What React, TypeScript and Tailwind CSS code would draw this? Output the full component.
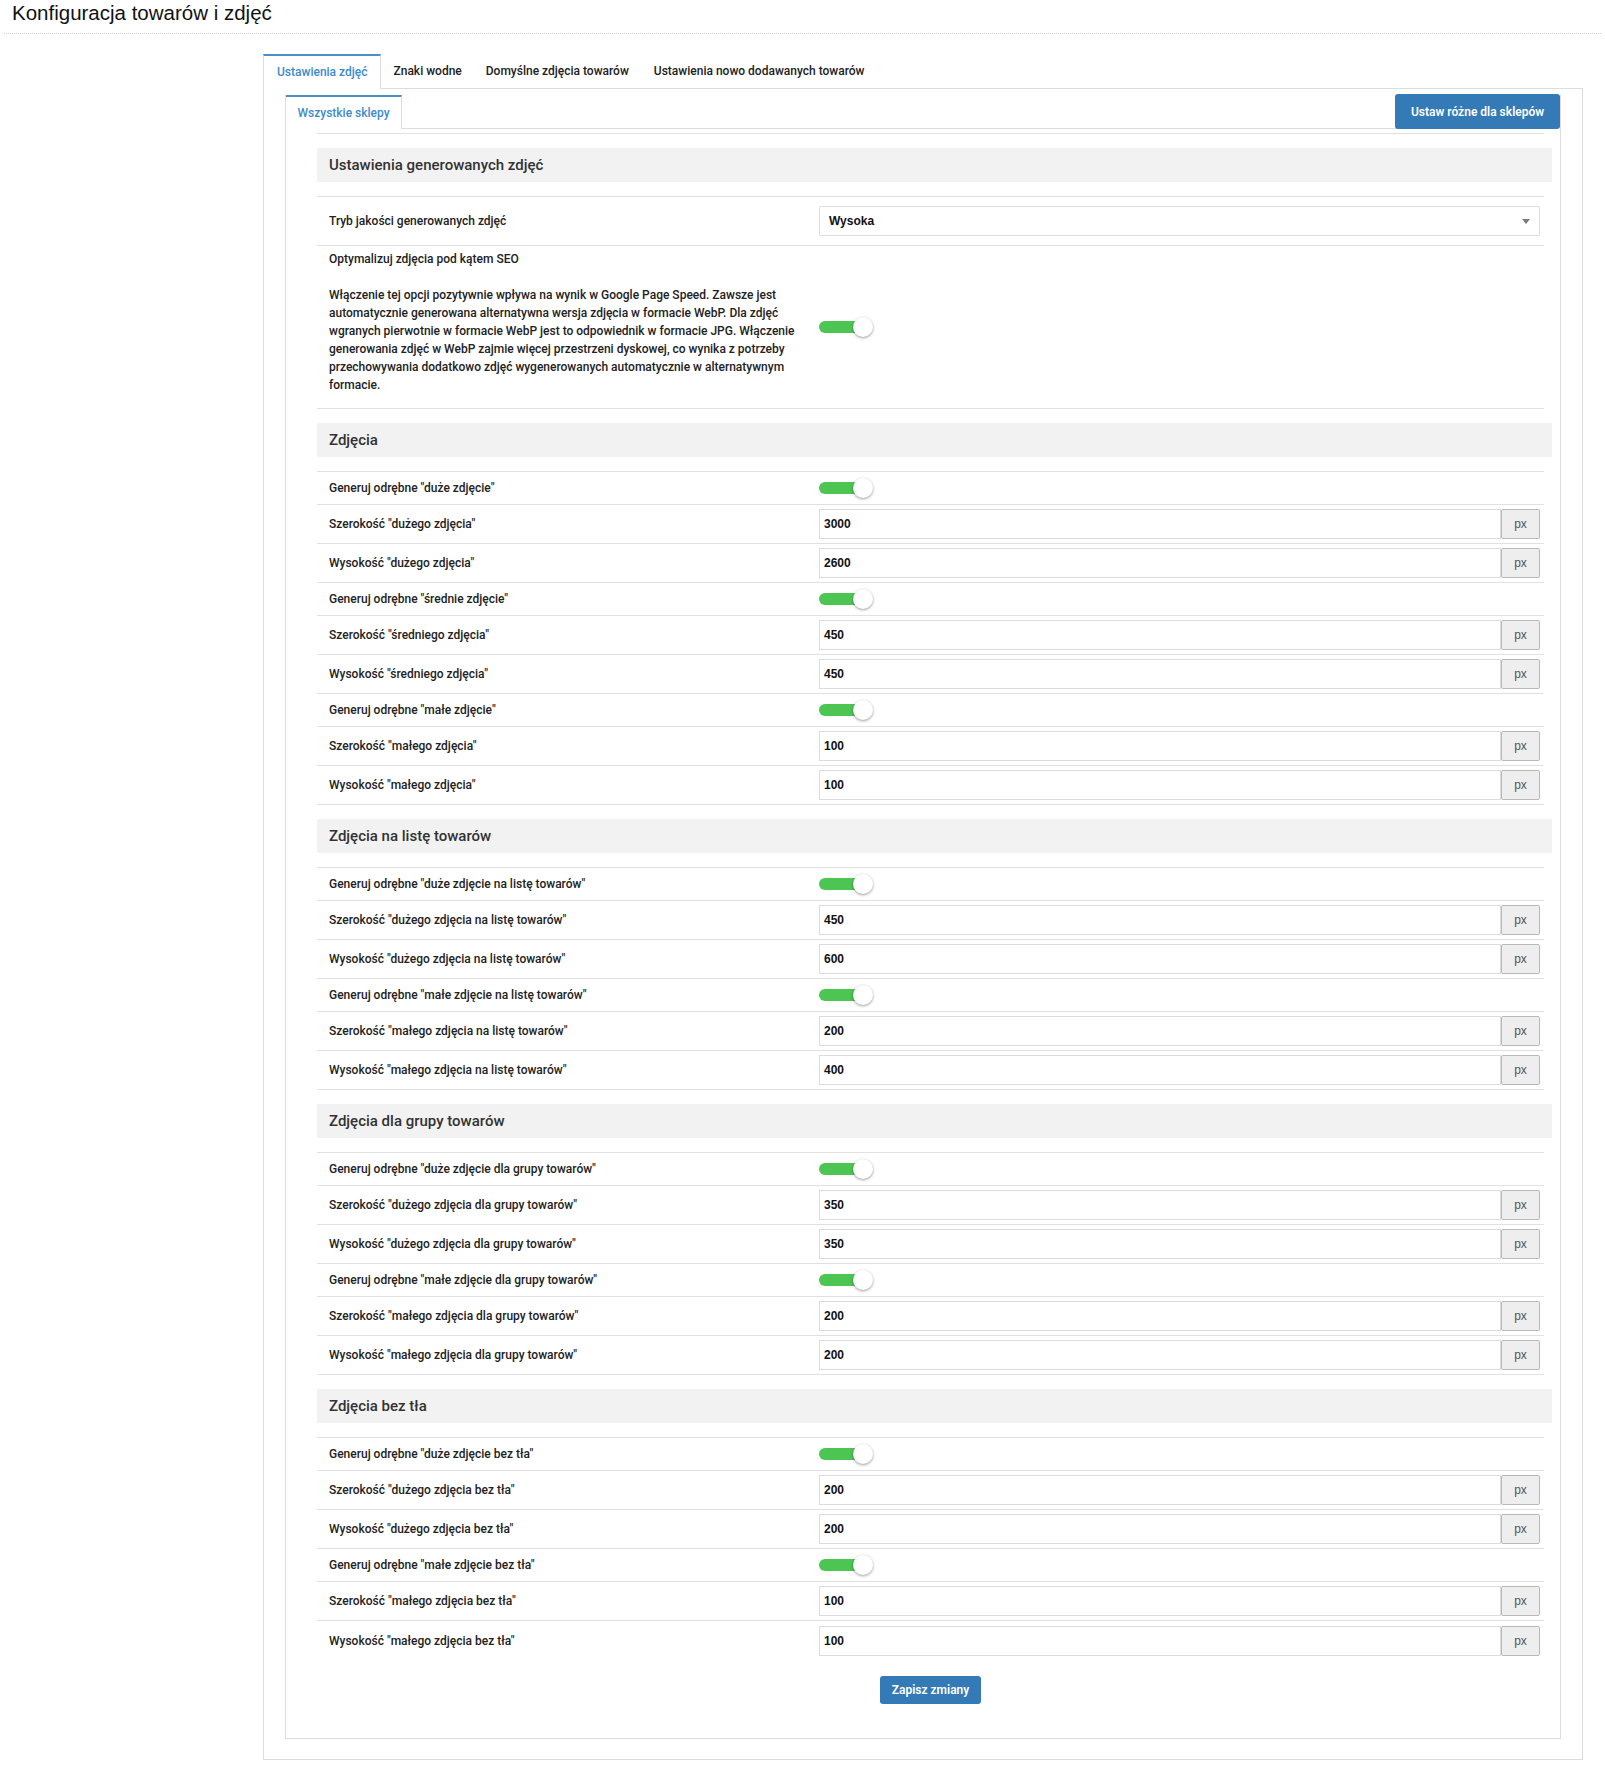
import React from "react";

const SANS = "font-['Roboto','Liberation_Sans',sans-serif]";

type RowT =
  | { kind: "toggle"; label: string }
  | { kind: "input"; label: string; value: string };

function Toggle() {
  return (
    <div className="flex items-center">
      <div className="h-[12px] w-[44px] rounded-full bg-[#4cc552]" />
      <div className="-ml-[10px] h-[20px] w-[20px] rounded-full bg-white shadow-[0_1px_3px_rgba(0,0,0,0.4)]" />
    </div>
  );
}

function PxInput({ value }: { value: string }) {
  return (
    <div className="flex h-[30px] w-full">
      <input
        readOnly
        value={value}
        className="h-full min-w-0 flex-1 border border-[#dcdcdc] bg-white px-[4px] font-['Liberation_Sans',Arial,sans-serif] text-[12px] font-semibold text-[#111] outline-none"
      />
      <div className="flex h-full w-[39px] items-center justify-center rounded-[2px] border border-[#b9b9b9] bg-[#eeeeee] font-['Liberation_Sans',Arial,sans-serif] text-[12px] text-[#555]">
        px
      </div>
    </div>
  );
}

function Row({ row, last }: { row: RowT; last: boolean }) {
  const border = last ? "" : "border-b border-[#e1e1e1]";
  if (row.kind === "toggle") {
    return (
      <div className={`flex h-[33px] ${border}`}>
        <div className="flex w-[490px] items-center pl-[12px] text-[12px] font-medium text-[#222]">{row.label}</div>
        <div className="flex flex-1 items-center pl-[12px] pr-[4px]">
          <Toggle />
        </div>
      </div>
    );
  }
  return (
    <div className={`flex h-[39px] ${border}`}>
      <div className="flex w-[490px] items-center pl-[12px] text-[12px] font-medium text-[#222]">{row.label}</div>
      <div className="flex flex-1 items-center pl-[12px] pr-[4px]">
        <PxInput value={row.value} />
      </div>
    </div>
  );
}

function SectionHeader({ title }: { title: string }) {
  return (
    <div className="mt-[14px] flex h-[34px] items-center bg-[#f2f2f2] pl-[12px] text-[15px] font-medium text-[#333]">
      {title}
    </div>
  );
}

function Section({ title, rows, isLast }: { title: string; rows: RowT[]; isLast?: boolean }) {
  return (
    <div>
      <SectionHeader title={title} />
      <div className="mr-[8px] mt-[14px] border-t border-[#e1e1e1]">
        {rows.map((r, i) => (
          <Row key={i} row={r} last={!!isLast && i === rows.length - 1} />
        ))}
      </div>
    </div>
  );
}

const sections: { title: string; rows: RowT[] }[] = [
  {
    title: "Zdjęcia",
    rows: [
      { kind: "toggle", label: 'Generuj odrębne "duże zdjęcie"' },
      { kind: "input", label: 'Szerokość "dużego zdjęcia"', value: "3000" },
      { kind: "input", label: 'Wysokość "dużego zdjęcia"', value: "2600" },
      { kind: "toggle", label: 'Generuj odrębne "średnie zdjęcie"' },
      { kind: "input", label: 'Szerokość "średniego zdjęcia"', value: "450" },
      { kind: "input", label: 'Wysokość "średniego zdjęcia"', value: "450" },
      { kind: "toggle", label: 'Generuj odrębne "małe zdjęcie"' },
      { kind: "input", label: 'Szerokość "małego zdjęcia"', value: "100" },
      { kind: "input", label: 'Wysokość "małego zdjęcia"', value: "100" },
    ],
  },
  {
    title: "Zdjęcia na listę towarów",
    rows: [
      { kind: "toggle", label: 'Generuj odrębne "duże zdjęcie na listę towarów"' },
      { kind: "input", label: 'Szerokość "dużego zdjęcia na listę towarów"', value: "450" },
      { kind: "input", label: 'Wysokość "dużego zdjęcia na listę towarów"', value: "600" },
      { kind: "toggle", label: 'Generuj odrębne "małe zdjęcie na listę towarów"' },
      { kind: "input", label: 'Szerokość "małego zdjęcia na listę towarów"', value: "200" },
      { kind: "input", label: 'Wysokość "małego zdjęcia na listę towarów"', value: "400" },
    ],
  },
  {
    title: "Zdjęcia dla grupy towarów",
    rows: [
      { kind: "toggle", label: 'Generuj odrębne "duże zdjęcie dla grupy towarów"' },
      { kind: "input", label: 'Szerokość "dużego zdjęcia dla grupy towarów"', value: "350" },
      { kind: "input", label: 'Wysokość "dużego zdjęcia dla grupy towarów"', value: "350" },
      { kind: "toggle", label: 'Generuj odrębne "małe zdjęcie dla grupy towarów"' },
      { kind: "input", label: 'Szerokość "małego zdjęcia dla grupy towarów"', value: "200" },
      { kind: "input", label: 'Wysokość "małego zdjęcia dla grupy towarów"', value: "200" },
    ],
  },
  {
    title: "Zdjęcia bez tła",
    rows: [
      { kind: "toggle", label: 'Generuj odrębne "duże zdjęcie bez tła"' },
      { kind: "input", label: 'Szerokość "dużego zdjęcia bez tła"', value: "200" },
      { kind: "input", label: 'Wysokość "dużego zdjęcia bez tła"', value: "200" },
      { kind: "toggle", label: 'Generuj odrębne "małe zdjęcie bez tła"' },
      { kind: "input", label: 'Szerokość "małego zdjęcia bez tła"', value: "100" },
      { kind: "input", label: 'Wysokość "małego zdjęcia bez tła"', value: "100" },
    ],
  },
];

const seoLines = [
  "Włączenie tej opcji pozytywnie wpływa na wynik w Google Page Speed. Zawsze jest",
  "automatycznie generowana alternatywna wersja zdjęcia w formacie WebP. Dla zdjęć",
  "wgranych pierwotnie w formacie WebP jest to odpowiednik w formacie JPG. Włączenie",
  "generowania zdjęć w WebP zajmie więcej przestrzeni dyskowej, co wynika z potrzeby",
  "przechowywania dodatkowo zdjęć wygenerowanych automatycznie w alternatywnym",
  "formacie.",
];

export default function App() {
  return (
    <div className={`min-h-[1767px] w-full bg-white ${SANS}`}>
      {/* Page title */}
      <div className="mx-[4px] h-[34px] border-b border-dotted border-[#cfcfcf] pl-[8px] pt-[1px] font-['Liberation_Sans',Arial,sans-serif] text-[20.5px] leading-[24px] text-[#111]">
        Konfiguracja towarów i zdjęć
      </div>

      {/* Outer tabs */}
      <div className="ml-[263px] mt-[20px] w-[1320px]">
        <div className="flex h-[35px] border-b border-[#dddddd] text-[12px] font-medium">
          <div className="-mb-px flex h-[35px] items-center border-l border-r border-t-2 border-[#dddddd] border-t-[#4a90c8] bg-white px-[13px] pb-[1px] text-[#3d8bcd]">
            Ustawienia zdjęć
          </div>
          <div className="flex items-center px-[12px] text-[#222]">Znaki wodne</div>
          <div className="flex items-center px-[12px] text-[#222]">Domyślne zdjęcia towarów</div>
          <div className="flex items-center px-[13px] text-[#222]">Ustawienia nowo dodawanych towarów</div>
        </div>

        <div className="border-b border-l border-r border-[#dddddd] px-[21px] pb-[20px] pt-[6px]">
          {/* Inner panel */}
          <div className="border-b border-l border-r border-[#dddddd] pb-[34px]">
            <div className="flex h-[34px] text-[12px] font-medium">
              <div className="flex h-[34px] w-[116px] items-center justify-center border-r border-t-2 border-[#dddddd] border-t-[#4a90c8] text-[#3d8bcd]">
                Wszystkie sklepy
              </div>
              <div className="mr-[17px] flex-1 border-b border-[#dddddd]" />
              <div className="relative -ml-[148px] -mt-[1px] flex h-[35px] w-[165px] items-center justify-center rounded-[3px] bg-[#337ab7] font-semibold text-white">
                Ustaw różne dla sklepów
              </div>
            </div>

            <div className="ml-[31px] mr-[8px] mt-[4px]">
              <div className="mr-[8px] border-t border-[#e1e1e1]" />

              {/* Section 1 */}
              <SectionHeader title="Ustawienia generowanych zdjęć" />
              <div className="mr-[8px] mt-[14px] border-t border-[#e1e1e1]">
                <div className="flex h-[49px] border-b border-[#e1e1e1]">
                  <div className="flex w-[490px] items-center pl-[12px] text-[12px] font-medium text-[#222]">
                    Tryb jakości generowanych zdjęć
                  </div>
                  <div className="flex flex-1 items-center pl-[12px] pr-[4px]">
                    <div className="flex h-[30px] w-full items-center justify-between rounded-[2px] border border-[#dcdcdc] bg-white pl-[9px] pr-[9px] font-['Liberation_Sans',Arial,sans-serif] text-[12px] font-semibold text-[#111]">
                      <span>Wysoka</span>
                      <svg width="8" height="5" viewBox="0 0 8 5">
                        <polygon points="0,0 8,0 4,5" fill="#7a7a7a" />
                      </svg>
                    </div>
                  </div>
                </div>
                <div className="flex h-[163px] border-b border-[#e1e1e1]">
                  <div className="w-[490px] pl-[12px] pt-[4px] text-[12px] font-medium leading-[18px] text-[#222]">
                    <div>Optymalizuj zdjęcia pod kątem SEO</div>
                    <div className="mt-[18px]">
                      {seoLines.map((l, i) => (
                        <div key={i} className="whitespace-nowrap">
                          {l}
                        </div>
                      ))}
                    </div>
                  </div>
                  <div className="flex flex-1 items-center pl-[12px] pr-[4px]">
                    <Toggle />
                  </div>
                </div>
              </div>

              {sections.map((s, i) => (
                <Section key={s.title} title={s.title} rows={s.rows} isLast={i === sections.length - 1} />
              ))}

              <div className="mr-[8px] mt-[16px] flex justify-center">
                <div className="flex h-[28px] w-[101px] items-center justify-center rounded-[3px] bg-[#337ab7] text-[12px] font-semibold text-white">
                  Zapisz zmiany
                </div>
              </div>
            </div>
          </div>
        </div>
      </div>
    </div>
  );
}
